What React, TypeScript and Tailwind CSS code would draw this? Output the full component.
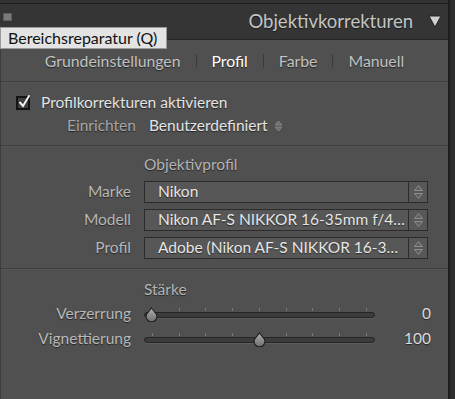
import React from 'react';

const shadow = '[text-shadow:0_1px_1px_rgba(0,0,0,0.55)]';

const Stepper: React.FC<{ className?: string; big?: boolean }> = ({ className, big }) =>
    big ? (
        <svg width="11" height="16" viewBox="0 0 11 16" className={className}>
            <path d="M5.5 1.5 L9.5 6.5 H1.5 Z" fill="#5f5f5f" stroke="#8e8e8e" strokeWidth="1" />
            <path d="M5.5 14.5 L9.5 9.5 H1.5 Z" fill="#5f5f5f" stroke="#8e8e8e" strokeWidth="1" />
        </svg>
    ) : (
        <svg width="9" height="12" viewBox="0 0 9 12" className={className}>
            <path d="M4.5 1 L8 5 H1 Z" fill="#6f6f6f" stroke="#8c8c8c" strokeWidth="0.8" />
            <path d="M4.5 11 L8 7 H1 Z" fill="#6f6f6f" stroke="#8c8c8c" strokeWidth="0.8" />
        </svg>
    );

const Checkbox: React.FC = () => (
    <div className="relative w-[14px] h-[14px] shrink-0 bg-[#3e3e3e] border-2 border-[#141414]">
        <svg width="14" height="16" viewBox="0 0 14 16" className="absolute left-0 -top-[5px]">
            <path d="M2 9.5 L5 13 L11 3" fill="none" stroke="#f0f0f0" strokeWidth="2" strokeLinecap="round" />
        </svg>
    </div>
);

const SelectBox: React.FC<{ label: string; value: string }> = ({ label, value }) => (
    <div className="flex items-center h-[22px]">
        <div className={`w-[130px] text-right text-[#b8b8b8] ${shadow}`}>{label}</div>
        <div className="ml-[13px] w-[284px] h-[22px] flex border border-[#2b2b2b] bg-[#575757]">
            <div className={`flex-1 pl-[13px] flex items-center text-[#e6e6e6] ${shadow} whitespace-nowrap overflow-hidden`}>
                {value}
            </div>
            <div className="w-[19px] border-l border-[#2b2b2b] flex items-center justify-center">
                <Stepper big />
            </div>
        </div>
    </div>
);

const Thumb: React.FC = () => (
    <svg width="15" height="15" viewBox="0 0 15 15">
        <defs>
            <linearGradient id="tg" x1="0" y1="0" x2="0" y2="1">
                <stop offset="0" stopColor="#b0b0b0" />
                <stop offset="1" stopColor="#6e6e6e" />
            </linearGradient>
        </defs>
        <path d="M7.5 1 L12.4 7.2 A5.4 5.4 0 1 1 2.6 7.2 Z" fill="url(#tg)" stroke="#1f1f1f" strokeWidth="1.1" />
    </svg>
);

const SliderRow: React.FC<{ label: string; value: string; pos: number }> = ({ label, value, pos }) => {
    const ticks = [0, 1, 2, 3, 4, 5, 6, 7, 8];
    return (
        <div className="flex items-center h-[20px]">
            <div className={`w-[130px] text-right text-[#b8b8b8] ${shadow}`}>{label}</div>
            <div className="ml-[13px] w-[231px] h-[20px] relative">
                {ticks.map((t) => (
                    <div
                        key={t}
                        className="absolute top-[4px] w-px h-[3px] bg-[#7a7a7a]"
                        style={{ left: 8 + t * 26.7 }}
                    />
                ))}
                <div className="absolute left-0 right-0 top-[8px] h-[6px] rounded-full bg-[#3c3c3c] border border-[#262626] shadow-[0_1px_0_rgba(255,255,255,0.08)]" />
                <div className="absolute top-[3px]" style={{ left: pos }}>
                    <Thumb />
                </div>
            </div>
            <div className={`w-[56px] text-right text-[#dcdcdc] ${shadow}`}>{value}</div>
        </div>
    );
};

const Sep: React.FC = () => <div className="h-px bg-[#3e3e3e] shadow-[0_1px_0_rgba(255,255,255,0.04)]" />;

const App: React.FC = () => {
    return (
        <div className="w-[455px] h-[399px] bg-[#2e2e2e] relative overflow-hidden font-['Lato',sans-serif] text-[15.5px] leading-none">
            <div className="w-[450px] h-full border-r-2 border-[#1e1e1e] flex flex-col">
                <div className="h-[4px] bg-[#333333] border-b border-[#1c1c1c]" />
                <div className="h-[35px] bg-[#353535] flex items-center relative">
                    <div className="absolute left-[3px] top-[9px] w-[9px] h-[8px] bg-[#7b7b7b] border border-[#5c5c5c]" />
                    <div className={`ml-auto text-[18.5px] text-[#c4c4c4] ${shadow}`}>Objektivkorrekturen</div>
                    <svg width="14" height="13" viewBox="0 0 14 13" className="ml-[15px] mr-[6px]">
                        <path d="M1 1 H13 L7 12 Z" fill="#cfcfcf" stroke="#222" strokeWidth="1" />
                    </svg>
                </div>
                <div className="flex-1 bg-[#505050] border-t border-[#262626] border-l border-l-[#3c3c3c]">
                    <div className={`h-[41px] flex items-center justify-center pt-[1px] text-[15.8px] text-[#c2c2c2] ${shadow}`}>
                        <span>Grundeinstellungen</span>
                        <span className="mx-[15px] w-px h-[14px] bg-[#3a3a3a]" />
                        <span className="text-white">Profil</span>
                        <span className="mx-[15px] w-px h-[14px] bg-[#3a3a3a]" />
                        <span>Farbe</span>
                        <span className="mx-[15px] w-px h-[14px] bg-[#3a3a3a]" />
                        <span>Manuell</span>
                    </div>
                    <Sep />
                    <div className="pt-[10px] h-[63px]">
                        <div className="h-[22px] flex items-center pl-[15px]">
                            <Checkbox />
                            <span className={`ml-[11px] text-[#e4e4e4] ${shadow}`}>Profilkorrekturen aktivieren</span>
                        </div>
                        <div className="h-[22px] mt-px flex items-center pl-[66px]">
                            <span className={`text-[#a6a6a6] ${shadow}`}>Einrichten</span>
                            <span className={`ml-[13px] text-[#e4e4e4] ${shadow}`}>Benutzerdefiniert</span>
                            <Stepper className="ml-[6px]" />
                        </div>
                    </div>
                    <Sep />
                    <div className="pt-[9px] h-[122px] flex flex-col">
                        <div className={`h-[20px] flex items-center pl-[143px] text-[#b4b4b4] ${shadow}`}>Objektivprofil</div>
                        <div className="mt-[6px] flex flex-col gap-[6px]">
                            <SelectBox label="Marke" value="Nikon" />
                            <SelectBox label="Modell" value="Nikon AF-S NIKKOR 16-35mm f/4…" />
                            <SelectBox label="Profil" value="Adobe (Nikon AF-S NIKKOR 16-3…" />
                        </div>
                    </div>
                    <Sep />
                    <div className="pt-[11px] flex flex-col">
                        <div className={`h-[20px] flex items-center pl-[143px] text-[#b4b4b4] ${shadow}`}>Stärke</div>
                        <div className="mt-[4px] flex flex-col gap-[5px]">
                            <SliderRow label="Verzerrung" value="0" pos={0} />
                            <SliderRow label="Vignettierung" value="100" pos={108} />
                        </div>
                    </div>
                </div>
            </div>
            <div className="absolute left-0 top-[27px] w-[167px] h-[22px] bg-[#e3e3e3] border border-[#9a9a9a] flex items-center pl-[7px] text-[16px] text-[#111]">
                Bereichsreparatur (Q)
            </div>
        </div>
    );
};

export default App;
